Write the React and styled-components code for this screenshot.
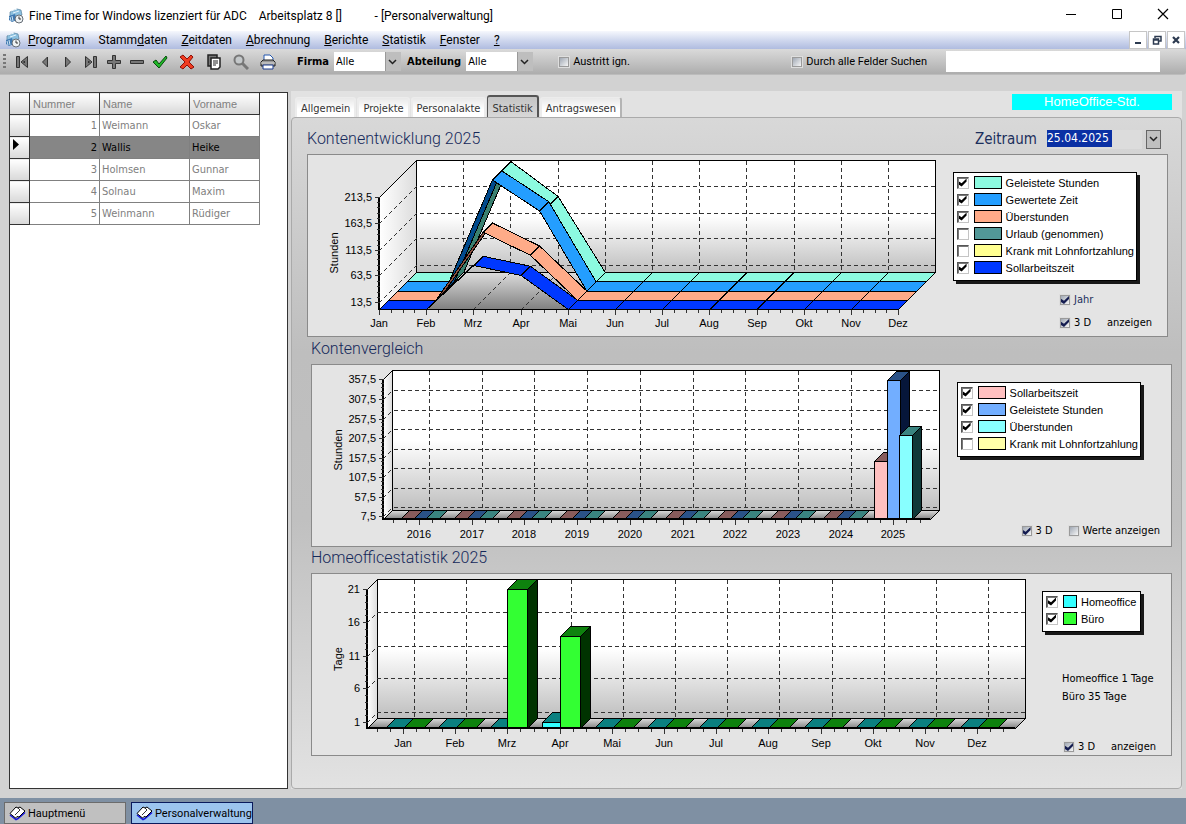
import React, { useState } from 'react'
import styled, { createGlobalStyle, css } from 'styled-components'

const ui = '"DejaVu Sans Condensed", "Noto Sans", sans-serif'
const arial = '"Liberation Sans", sans-serif'
const narrow = 'Roboto, "Liberation Sans", sans-serif'

const GlobalStyle = createGlobalStyle`
* { box-sizing: border-box; }
body { margin: 0; background: #d2d2d2; color: #000; font-family: ${ui}; font-size: 11px; }
button, input, select { font: inherit; color: inherit; margin: 0; }
`

const Window = styled.div`
  min-height: 100vh;
  display: flex;
  flex-direction: column;
`

const TitleBar = styled.header`
  display: flex;
  align-items: center;
  gap: 5px;
  height: 31px;
  padding-left: 8px;
  background: #fff;
  font-family: ${narrow};
  font-size: 12px;
  white-space: pre;
`

const WindowButtons = styled.div`
  display: flex;
  margin-left: auto;
`

const WindowButton = styled.button`
  width: 46px;
  height: 30px;
  padding: 0;
  border: 0;
  background: none;
`

const MenuBar = styled.nav`
  display: flex;
  align-items: center;
  height: 18px;
  padding-left: 5px;
  background: linear-gradient(#f6f8fd, #d0d8ee 50%, #b0bce0);
  font-size: 12px;
`

const MenuItem = styled.button`
  padding: 0;
  margin-left: ${({ $first }) => ($first ? 7 : 14)}px;
  border: 0;
  background: none;
  font-family: ${narrow};
  line-height: 18px;
`

const MdiButtons = styled.div`
  display: flex;
  gap: 1px;
  margin-left: auto;
  padding-right: 1px;
`

const MdiButton = styled.button`
  width: 18px;
  height: 18px;
  padding: 0;
  border: 1px solid #c6c6c6;
  background: #fff;
  svg { display: block; margin: auto; }
`

const ToolBar = styled.div`
  display: flex;
  align-items: center;
  height: 26px;
  padding: 0 26px 0 3px;
  background: linear-gradient(#dadada, #c6c6c6 45%, #adadad);
  border-bottom: 1px solid #bcbcbc;
  border-radius: 0 3px 3px 0;
`

const Grip = styled.div`
  width: 3px;
  height: 15px;
  margin-right: 4px;
  background: repeating-linear-gradient(#777 0 2px, transparent 2px 4px);
`

const ToolButton = styled.button`
  display: grid;
  place-items: center;
  width: ${({ $wide }) => ($wide ? 27 : 23)}px;
  height: 24px;
  padding: 0;
  border: 0;
  background: none;
  &:nth-of-type(8) { margin-left: 2px; }
`

const ToolLabel = styled.label`
  font-weight: bold;
  margin: 0 5px 0 ${({ $gap }) => $gap}px;
`

const SelectBox = styled.span`
  display: flex;
  position: relative;
  width: 67px;
  height: 19px;
  background: linear-gradient(to right, #fff 51px, #999 51px 52px, #bebebe 52px);
  svg { position: absolute; right: 4px; top: 7px; pointer-events: none; }
`

const Select = styled.select`
  appearance: none;
  width: 100%;
  padding: 0 2px;
  border: 0;
  background: none;
  outline: 0;
`

const ToolCheck = styled.div`
  margin-left: ${({ $end }) => ($end ? 'auto' : '26px')};
`

const SearchInput = styled.input`
  width: 214px;
  height: 21px;
  border: 0;
  background: #fff;
  margin-left: 19px;
`

const CheckLabel = styled.label`
  display: flex;
  align-items: center;
  gap: 4px;
  white-space: nowrap;
  color: ${({ $color }) => $color || '#000'};
  font-family: ${({ $narrow }) => ($narrow ? narrow : ui)};
`

const checkMark = css`
  display: grid;
  place-items: center;
  &:checked::before {
    content: '';
    width: 8px;
    height: 8px;
    background: ${({ $color }) => $color || '#000'};
    clip-path: polygon(0 35%, 38% 60%, 100% 0, 100% 38%, 38% 100%, 0 75%);
  }
`

const SmallCheck = styled.input`
  appearance: none;
  width: 10px;
  height: 10px;
  flex: none;
  border: 1px solid #9a9a9a;
  background: linear-gradient(135deg, #a0a8b4, #f6f6f6);
  box-shadow: 0 0 0 1px #dedede;
  ${checkMark}
`

const LegendCheck = styled.input`
  appearance: none;
  width: 12px;
  height: 12px;
  flex: none;
  border: 1px solid;
  border-color: #555 #c4c4c4 #c4c4c4 #555;
  box-shadow: inset 1px 1px 0 #777;
  background: #fff;
  ${checkMark}
`

const Main = styled.main`
  flex: 1;
  display: grid;
  grid-template-columns: 279px 1fr;
  column-gap: 3px;
  padding: 16px 4px 9px 9px;
`

const ListPanel = styled.section`
  margin-top: 1px;
  border: 1px solid #333;
  background: #fff;
`

const Table = styled.table`
  border-collapse: collapse;
  table-layout: fixed;
  width: 251px;
  margin: -1px 0 0 -1px;
  color: #808080;
`

const head = css`
  border: 1px solid #333;
  background: linear-gradient(#fff, #d8d8d8);
`

const Th = styled.th`
  ${head}
  height: 22px;
  padding: 0 3px;
  text-align: left;
  font-weight: normal;
  font-family: ${arial};
  width: ${({ $w }) => $w}px;
`

const RowHead = styled.td`
  ${head}
  padding: 0 0 6px 3px;
  line-height: 0;
`

const Tr = styled.tr`
  ${({ $active }) => $active && 'background: #868686; color: #000;'}
`

const Td = styled.td`
  height: 22px;
  padding: 0 2px;
  border: 1px solid #808080;
  text-align: ${({ $right }) => ($right ? 'right' : 'left')};
`

const Detail = styled.section`
  display: flex;
  flex-direction: column;
  background: #e2e2e2;
`

const TabStrip = styled.div`
  display: flex;
  align-items: flex-end;
  height: 26px;
  padding: 0 10px 0 4px;
`

const Tab = styled.button`
  height: 20px;
  padding: 2px 4px 0;
  margin-right: 1px;
  border: 1px solid #ececec;
  border-width: 1px 2px 0 2px;
  border-radius: 3px 3px 0 0;
  color: #333;
  background: linear-gradient(#e8e8e8, #fff 60%);
  &:last-of-type { border-right-color: #b4b4b4; }
  ${({ $active }) => $active && css`
    height: 22px;
    border: 1px solid #555;
    border-width: 2px 2px 0 1px;
    background: linear-gradient(#c4c4c4, #d8d8d8);
  `}
`

const Badge = styled.div`
  align-self: flex-start;
  width: 160px;
  margin: 3px 0 0 auto;
  background: #00ffff;
  color: #fff;
  font-family: ${arial};
  font-size: 13px;
  line-height: 16px;
  text-align: center;
`

const TabBody = styled.div`
  flex: 1;
  padding: 0 9px 0 19px;
  border: 1px solid #aaa;
  border-radius: 4px;
  background: linear-gradient(#d8d8d8, #bebebe 35%, #c0c0c0 60%, #e2e2e2);
`

const HeadingRow = styled.div`
  display: flex;
  align-items: center;
  height: 36px;
  padding: 6px 11px 0 0;
  margin-left: -4px;
`

const Heading = styled.h2`
  margin: 0 0 ${({ $line }) => ($line ? 4 : 0)}px;
  color: #14285a;
  font-family: ${narrow};
  font-size: 16px;
  font-weight: 300;
  line-height: ${({ $line }) => $line || 16}px;
`

const DateLabel = styled.label`
  margin-left: auto;
  color: #1c2f5c;
  font-size: 15px;
`

const DateField = styled.input`
  width: 95px;
  height: 19px;
  margin: 0 4px 0 10px;
  padding: 0 0 2px;
  border: 0;
  color: #fff;
  font-size: 12px;
  background: linear-gradient(to right, #0a30a4 65px, transparent 65px) top left / 100% 17px no-repeat #dcdcdc;
`

const DropButton = styled.button`
  display: grid;
  place-items: center;
  width: 15px;
  height: 19px;
  padding: 0;
  border: 1px solid #666;
  background: #c0c0c0;
`

const ChartPanel = styled.section`
  display: flex;
  align-items: flex-start;
  height: 183px;
  margin: ${({ $first }) => ($first ? '0 4px 0 -4px' : '0')};
  border: 1px solid #8a8a8a;
  background: #e4e4e4;
  > svg { flex: none; }
`

const Side = styled.aside`
  display: flex;
  flex-direction: column;
  align-items: flex-end;
  align-self: stretch;
  margin-left: auto;
  padding: 17px 30px 0 0;
`

const Legend = styled.div`
  min-width: 99px;
  padding: 1px 2px 4px 3px;
  border: 1px solid #000;
  background: #fff;
  box-shadow: 3px 3px 0 #181818;
`

const LegendRow = styled.label`
  display: flex;
  align-items: center;
  height: 17px;
  font-family: ${arial};
  white-space: nowrap;
`

const Swatch = styled.span`
  width: ${({ $w }) => $w}px;
  height: 13px;
  margin: 0 4px 0 5px;
  border: 1px solid #000;
  background: ${({ $c }) => $c};
`

const Options = styled.div`
  display: grid;
  grid-template-columns: 47px auto;
  align-items: center;
  row-gap: 9px;
  margin: ${({ $push }) => ($push ? 'auto' : '12px')} ${({ $right }) => $right || 0}px ${({ $bottom }) => $bottom || 0}px 0;
  line-height: 14px;
`

const Totals = styled.div`
  width: 98px;
  margin-top: 38px;
  margin-right: -19px;
  line-height: 18px;
  white-space: nowrap;
`

const TaskBar = styled.footer`
  display: flex;
  gap: 5px;
  height: 26px;
  padding: 4px 4px 0;
  background: #7f90a3;
`

const TaskButton = styled.button`
  display: flex;
  align-items: center;
  gap: 2px;
  width: 122px;
  padding: 0 0 0 4px;
  font-family: ${narrow};
  white-space: nowrap;
  border: 1px solid ${({ $active }) => ($active ? '#0a1a5c' : '#6c6c6c')};
  background: ${({ $active }) => ($active ? '#9cc4ee' : '#c0c0c0')};
  svg { flex: none; }
`

const ChartText = styled.text`
  font-family: ${arial};
  font-size: 11px;
  text-anchor: ${({ $anchor }) => $anchor || 'middle'};
`

const Chevron = () => (
  <svg width="9" height="6" viewBox="0 0 9 6">
    <path d="M1 1l3.500 3.500L8 1" fill="none" stroke="#222" strokeWidth="1.500" />
  </svg>
)

const AppIcon = () => (
  <svg width="16" height="16" viewBox="0 0 16 16">
    <path d="M2 4l7-3 4 1 1 5-6 2-6 1z" fill="#8cc0e0" stroke="#54809c" strokeWidth=".7" />
    <path d="M3 3l6-2M5 5l6-2" stroke="#e4f2fa" />
    <path d="M1 8l6-2 2 6-5 2-3-2z" fill="#3f78b0" />
    <path d="M2 9l1 4M4 8l1 5" stroke="#cce4f4" />
    <circle cx="11" cy="11" r="4" fill="#eef2f4" stroke="#666e76" />
    <path d="M11 8.500V11h2" fill="none" stroke="#333" />
  </svg>
)

const BookIcon = () => (
  <svg width="17" height="16" viewBox="0 0 17 16">
    <path d="M1 10l6 4.500 2-1 7-6" fill="none" stroke="#1414e0" strokeWidth="1.500" />
    <path d="M1 8.500L7 2l2 1 2-1 5 4-6 6-2-.5L6.500 13z" fill="#fff" stroke="#000" />
    <path d="M9 3l2 2-5 5" fill="none" stroke="#000" strokeWidth=".8" />
  </svg>
)

const toolIcons = [
  ['Erster', <path d="M2 2.500h2v11H2zM9 2.500v11L4.500 8zM10.500 4v8L14 13.500v-11z" />],
  ['Zurück', <path d="M10.500 3v10L5.500 8z" />],
  ['Weiter', <path d="M5.500 3v10l5-5z" />],
  ['Letzter', <path d="M2 2.500v11l3.500-2v-7zM7 2.500v11L11.500 8zM12 2.500h2v11h-2z" />],
  ['Neu', <path d="M6.500 1.500h3v5h5v3h-5v5h-3v-5h-5v-3h5z" />],
  ['Löschen', <path d="M1.500 6.500h13v3h-13z" />],
  ['Speichern', <path d="M1 8l3-2 3 4 7-8 1 2-8 10z" fill="#20b828" stroke="#064c0c" />],
  ['Abbrechen', <path d="M1 3l3-2 4 4 4-4 2 2-4 5 5 5-3 2-4-4-4 4-3-2 5-5z" fill="#f03c20" stroke="#8c1008" />],
  ['Kopieren', <g fill="#fff" stroke="#222" strokeWidth="1.500"><path d="M2 1h9v11H2z" fill="#777" /><path d="M5 4h9v9l-2 2H5z" /><path d="M7 7h5M7 9h5M7 11h3" strokeWidth="1" /></g>],
  ['Suchen', <g><circle cx="6" cy="6" r="4.500" fill="#c4c8ca" stroke="#777" strokeWidth="2" /><path d="M9 9l6 6" stroke="#777" strokeWidth="3" /></g>],
  ['Drucken', <g stroke="#222"><path d="M4 8V1h6l3 3v4z" fill="#fff" stroke="#2458b0" /><path d="M1 8l2-2h10l2 2v4H1z" fill="#999" /><path d="M3 11h10v4H3z" fill="#fff" stroke="#1c3c90" /><path d="M1 9h14" stroke="#ddd" /></g>],
]
// the step icons at both ends are a bar with one triangle
toolIcons[0][1] = <path d="M2.500 2.500h3v11h-3zM13.500 2.500v11L7 8zM10.500 7v2L9.500 8z" />
toolIcons[3][1] = <path d="M2.500 2.500v11L9 8zM10.500 2.500h3v11h-3zM5.500 7v2l1-1z" />

const menus = [
  ['', 'P', 'rogramm'], ['Stamm', 'd', 'aten'], ['', 'Z', 'eitdaten'], ['', 'A', 'brechnung'],
  ['', 'B', 'erichte'], ['', 'S', 'tatistik'], ['', 'F', 'enster'], ['', '?', ''],
]

const persons = [
  [1, 'Weimann', 'Oskar'],
  [2, 'Wallis', 'Heike'],
  [3, 'Holmsen', 'Gunnar'],
  [4, 'Solnau', 'Maxim'],
  [5, 'Weinmann', 'Rüdiger'],
]

const tabs = ['Allgemein', 'Projekte', 'Personalakte', 'Statistik', 'Antragswesen']
const months = ['Jan', 'Feb', 'Mrz', 'Apr', 'Mai', 'Jun', 'Jul', 'Aug', 'Sep', 'Okt', 'Nov', 'Dez']
const years = [2016, 2017, 2018, 2019, 2020, 2021, 2022, 2023, 2024, 2025]

const accounts = [
  { name: 'Geleistete Stunden', color: '#8cfae0', on: true },
  { name: 'Gewertete Zeit', color: '#249eff', on: true },
  { name: 'Überstunden', color: '#ffab88', on: true },
  { name: 'Urlaub (genommen)', color: '#529898', on: false },
  { name: 'Krank mit Lohnfortzahlung', color: '#ffff90', on: false },
  { name: 'Sollarbeitszeit', color: '#0038ff', on: true },
]
const compare = [
  { name: 'Sollarbeitszeit', color: '#ffc0c0', on: true },
  { name: 'Geleistete Stunden', color: '#72aeff', on: true },
  { name: 'Überstunden', color: '#88ffff', on: true },
  { name: 'Krank mit Lohnfortzahlung', color: '#ffffa8', on: false },
]
const places = [
  { name: 'Homeoffice', color: '#33ffff', on: true },
  { name: 'Büro', color: '#33ff33', on: true },
]

// heights above the floor for Mrz and Apr; the rest of the year is zero
const ribbons = [
  { color: '#8cfae0', dark: '#3a8070', mrz: 111, apr: 76 },
  { color: '#249eff', dark: '#004a8c', mrz: 111, apr: 80 },
  { color: '#ffab88', dark: '#8a5040', mrz: 68, apr: 45 },
  { color: '#0038ff', dark: '#001c80', mrz: 44, apr: 34 },
]

const Ribbon = ({ row, index, x0, base, step }) => {
  const d = 37 / 4
  const off = (3 - index) * d
  const height = (i) => (i === 2 ? row.mrz : i === 3 ? row.apr : 0)
  const pts = months.map((m, i) => [x0 + i * step + off, base - off - height(i)])
  return pts.slice(0, -1).map(([x, y], i) => {
    const [nx, ny] = pts[i + 1]
    return (
      <polygon key={i} fill={i === 1 ? row.dark : row.color} stroke="#000"
        points={`${x},${y} ${nx},${ny} ${nx + d},${ny - d} ${x + d},${y - d}`} />
    )
  })
}

const Bar = ({ x, w, h, base, d, colors: [front, top, side] }) => (
  <g stroke="#000">
    <polygon fill={top} points={`${x},${base - h} ${x + w},${base - h} ${x + w + d},${base - h - d} ${x + d},${base - h - d}`} />
    {h > 0 && <polygon fill={side} points={`${x + w},${base - h} ${x + w + d},${base - h - d} ${x + w + d},${base - d} ${x + w},${base}`} />}
    {h > 0 && <rect fill={front} x={x} y={base - h} width={w} height={h} />}
  </g>
)

const Chart = ({ id, width, axis, top, right, d, ticks, labels, first, step, unit, gridShift, from, heavy, children }) => {
  const base = 154
  const minor = []
  for (let i = from; i <= (labels.length - 1) * 4 - from; i++) minor.push(first + (i * step) / 4)
  const gap = (ticks[ticks.length - 1][0] - ticks[0][0]) / (ticks.length - 1)
  return (
    <svg width={width} height="181" viewBox={`0 0 ${width} 181`} role="img" aria-label={unit}>
      <defs>
        <linearGradient id={id + 'wall'} x2="0" y2="1">
          <stop offset=".5" stopColor="#fff" /><stop offset="1" stopColor="#bebebe" />
        </linearGradient>
        <linearGradient id={id + 'left'}><stop stopColor="#fff" /><stop offset="1" stopColor="#dcdcdc" /></linearGradient>
        <linearGradient id={id + 'floor'} x2="0" y2="1"><stop stopColor="#dcdcdc" /><stop offset="1" stopColor="#808080" /></linearGradient>
      </defs>
      <g shapeRendering="crispEdges" transform="translate(.5 .5)">
        <polygon fill={`url(#${id}left)`} stroke="#000" points={`${axis},${top + d} ${axis + d},${top} ${axis + d},${base - d} ${axis},${base}`} />
        <rect fill={`url(#${id}wall)`} stroke="#000" x={axis + d} y={top} width={right - axis - d} height={base - d - top} />
        <polygon fill={`url(#${id}floor)`} stroke="#000" points={`${axis},${base} ${axis + d},${base - d} ${right},${base - d} ${right - d},${base}`} />
        <g stroke="#333" strokeDasharray="4 3">
          {ticks.slice(1).map(([y]) => <path key={y} d={`M${axis} ${y}l${d} ${-d}H${right}`} fill="none" />)}
          {labels.map((l, i) => {
            const x = Math.round(first + i * step + gridShift)
            return x > axis + d + 2 && x < right - 10 && <path key={l} d={`M${x} ${top}V${base - d}`} />
          })}
          {d > 20 && labels.slice(1, -1).map((l, i) => <path key={l} d={`M${Math.round(first + (i + 1) * step)} ${base}l${d} ${-d}`} />)}
        </g>
        {children}
        <g stroke="#000" transform="translate(-.5 -.5)">
          <path d={`M${axis} ${top + d}V${base + 1}`} strokeWidth="2" />
          {heavy && <path d={`M${axis} ${base}H${right - d}`} strokeWidth="2" />}
        </g>
        <path d={`M${axis} ${base}H${right - d}`} stroke="#000" />
        <g stroke="#333">
          {ticks.map(([y]) => <path key={y} d={`M${axis - 5} ${y}H${axis}`} />)}
          {ticks.slice(1).map(([y]) => [1, 2, 3, 4].map((n) => (
            <path key={y + n / 10} d={`M${axis - 3} ${Math.round(y - (gap * n) / 5)}H${axis}`} />
          )))}
          {minor.map((x) => <path key={x} d={`M${Math.round(x)} ${base}v3`} />)}
          {labels.map((l, i) => <path key={l} d={`M${Math.round(first + i * step)} ${base}v5`} />)}
        </g>
      </g>
      {ticks.map(([y, text]) => <ChartText key={text} x={axis - 7} y={y + 4} $anchor="end">{text}</ChartText>)}
      {labels.map((l, i) => <ChartText key={l} x={Math.round(first + i * step)} y={heavy ? 173 : 172}>{l}</ChartText>)}
      <ChartText transform={`translate(30 ${heavy ? 85 : 98}) rotate(-90)`}>{unit}</ChartText>
    </svg>
  )
}

const LegendBox = ({ items, swatch = 28 }) => (
  <Legend>
    {items.map((item) => (
      <LegendRow key={item.name}>
        <LegendCheck type="checkbox" defaultChecked={item.on} />
        <Swatch $w={swatch} $c={item.color} />
        {item.name}
      </LegendRow>
    ))}
  </Legend>
)

const Check = ({ label, checked, color, plain }) => (
  <CheckLabel $color={color} $narrow={plain}>
    <SmallCheck type="checkbox" defaultChecked={checked} $color="#141c50" />
    {label}
  </CheckLabel>
)

const compareColors = [
  ['#ffc0c0', '#885c5c', '#402424'],
  ['#72aeff', '#2a5288', '#06163a'],
  ['#88ffff', '#3a8480', '#103838'],
]
const placeColors = [
  ['#33ffff', '#0b8080', '#003c3c'],
  ['#33ff33', '#0e820e', '#003300'],
]

const App = () => {
  const [tab, setTab] = useState('Statistik')
  const [active, setActive] = useState(2)

  return (
    <Window>
      <GlobalStyle />
      <TitleBar>
        <AppIcon />
        <span>{'Fine Time for Windows lizenziert für ADC    Arbeitsplatz 8 []           - [Personalverwaltung]'}</span>
        <WindowButtons>
          <WindowButton aria-label="Minimieren"><svg width="12" height="12"><path d="M1 6.500h10" stroke="#000" /></svg></WindowButton>
          <WindowButton aria-label="Maximieren"><svg width="12" height="12"><path d="M1.500 1.500h9v9h-9z" fill="none" stroke="#000" /></svg></WindowButton>
          <WindowButton aria-label="Schließen"><svg width="12" height="12"><path d="M1 1l10 10M11 1L1 11" stroke="#000" strokeWidth="1.200" /></svg></WindowButton>
        </WindowButtons>
      </TitleBar>

      <MenuBar>
        <AppIcon />
        {menus.map(([a, key, b], i) => (
          <MenuItem key={key + b} $first={i === 0}>{a}<u>{key}</u>{b}</MenuItem>
        ))}
        <MdiButtons>
          <MdiButton aria-label="Fenster minimieren"><svg width="10" height="10"><path d="M2 8h6" stroke="#2c3a50" strokeWidth="2" /></svg></MdiButton>
          <MdiButton aria-label="Fenster wiederherstellen">
            <svg width="10" height="10"><path d="M3 3V1.500h6V6H7M1.500 4h5v5h-5zM1 5h6" fill="none" stroke="#2c3a50" strokeWidth="1.500" /></svg>
          </MdiButton>
          <MdiButton aria-label="Fenster schließen"><svg width="10" height="10"><path d="M2 2l6 6M8 2L2 8" stroke="#2c3a50" strokeWidth="2.200" /></svg></MdiButton>
        </MdiButtons>
      </MenuBar>

      <ToolBar>
        <Grip />
        {toolIcons.map(([name, icon], i) => (
          <ToolButton key={name} aria-label={name} $wide={i > 6}>
            <svg width="16" height="16" viewBox="0 0 16 16" fill="#777" stroke="#333">{icon}</svg>
          </ToolButton>
        ))}
        <ToolLabel htmlFor="firma" $gap={16}>Firma</ToolLabel>
        <SelectBox><Select id="firma"><option>Alle</option></Select><Chevron /></SelectBox>
        <ToolLabel htmlFor="abteilung" $gap={6}>Abteilung</ToolLabel>
        <SelectBox><Select id="abteilung"><option>Alle</option></Select><Chevron /></SelectBox>
        <ToolCheck><Check label="Austritt ign." plain /></ToolCheck>
        <ToolCheck $end><Check label="Durch alle Felder Suchen" plain /></ToolCheck>
        <SearchInput aria-label="Suchbegriff" />
      </ToolBar>

      <Main>
        <ListPanel>
          <Table>
            <thead>
              <tr>
                <Th $w={20} aria-label="Auswahl" />
                <Th $w={70}>Nummer</Th>
                <Th $w={90}>Name</Th>
                <Th $w={70}>Vorname</Th>
              </tr>
            </thead>
            <tbody>
              {persons.map(([nr, name, first]) => (
                <Tr key={nr} $active={nr === active} onClick={() => setActive(nr)}>
                  <RowHead>{nr === active && <svg width="6" height="11"><path d="M0 0l6 5.500L0 11z" /></svg>}</RowHead>
                  <Td $right>{nr}</Td>
                  <Td>{name}</Td>
                  <Td>{first}</Td>
                </Tr>
              ))}
            </tbody>
          </Table>
        </ListPanel>

        <Detail>
          <TabStrip>
            {tabs.map((t) => <Tab key={t} $active={t === tab} onClick={() => setTab(t)}>{t}</Tab>)}
            <Badge>HomeOffice-Std.</Badge>
          </TabStrip>
          <TabBody>
            <HeadingRow>
              <Heading>Kontenentwicklung 2025</Heading>
              <DateLabel htmlFor="zeitraum">Zeitraum</DateLabel>
              <DateField id="zeitraum" defaultValue="25.04.2025" />
              <DropButton aria-label="Kalender öffnen"><Chevron /></DropButton>
            </HeadingRow>
            <ChartPanel $first>
              <Chart id="a" width={636} axis={71} top={5} right={627} d={37} first={71} step={47.2} gridShift={37} from={0}
                unit="Stunden" labels={months} ticks={[[42, '213,5'], [68, '163,5'], [95, '113,5'], [120, '63,5'], [147, '13,5']]}>
                {ribbons.map((row, i) => <Ribbon key={row.color} row={row} index={i} x0={71} base={154} step={47.2} />)}
              </Chart>
              <Side>
                <LegendBox items={accounts} />
                <Options $right={-15}>
                  <Check label="Jahr" checked color="#1c2f5c" /><span />
                  <Check label="3 D" checked /><span>anzeigen</span>
                </Options>
              </Side>
            </ChartPanel>

            <Heading $line={23}>Kontenvergleich</Heading>
            <ChartPanel>
              <Chart id="b" width={636} axis={71} top={5} right={627} d={9} first={107} step={52.7} gridShift={10} from={-2} heavy
                unit="Stunden" labels={years}
                ticks={[[14, '357,5'], [34, '307,5'], [54, '257,5'], [73, '207,5'], [93, '157,5'], [112, '107,5'], [132, '57,5'], [151, '7,5']]}>
                {years.map((y, i) => compareColors.map((colors, n) => (
                  <Bar key={y + n / 10} x={Math.round(107 + i * 52.7) - 19 + n * 13 - (n === 2 ? 1 : 0)} w={13} base={154} d={9}
                    h={y === 2025 ? [58, 139, 84][n] : 0} colors={colors} />
                )))}
              </Chart>
              <Side>
                <LegendBox items={compare} />
                <Options $push $right={-19} $bottom={8}>
                  <Check label="3 D" checked /><Check label="Werte anzeigen" />
                </Options>
              </Side>
            </ChartPanel>

            <Heading $line={22}>Homeofficestatistik 2025</Heading>
            <ChartPanel>
              <Chart id="c" width={722} axis={55} top={5} right={713} d={10} first={91} step={52.2} gridShift={11} from={-2} heavy
                unit="Tage" labels={months} ticks={[[15, '21'], [48, '16'], [82, '11'], [114, '6'], [148, '1']]}>
                {months.map((m, i) => placeColors.map((colors, n) => (
                  <Bar key={m + n} x={Math.round(91 + i * 52.2) - (n ? 0 : 18)} w={n ? 20 : 18} base={154} d={10}
                    h={n ? { Mrz: 139, Apr: 92 }[m] || 0 : m === 'Apr' ? 6 : 0} colors={colors} />
                )))}
              </Chart>
              <Side>
                <LegendBox items={places} swatch={14} />
                <Totals>
                  <div>Homeoffice 1 Tage</div>
                  <div>Büro 35 Tage</div>
                </Totals>
                <Options $push $right={-15} $bottom={1}>
                  <Check label="3 D" checked /><span>anzeigen</span>
                </Options>
              </Side>
            </ChartPanel>
          </TabBody>
        </Detail>
      </Main>

      <TaskBar>
        <TaskButton><BookIcon />Hauptmenü</TaskButton>
        <TaskButton $active><BookIcon />Personalverwaltung</TaskButton>
      </TaskBar>
    </Window>
  )
}

export default App
